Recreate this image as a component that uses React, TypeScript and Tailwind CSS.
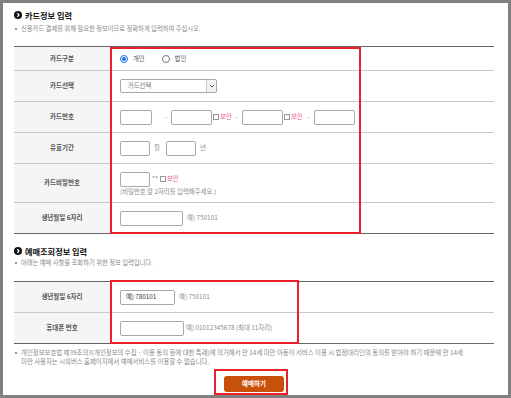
import { type FC, type ReactNode } from "react";

const KR = "font-['Noto_Sans_CJK_KR','Noto_Sans',sans-serif]";

const SectionTitle: FC<{ children: ReactNode }> = ({ children }) => (
  <div className="flex items-center h-[12px] gap-[3px]">
    <span className="w-[8px] h-[8px] rounded-full bg-[#111] flex items-center justify-center">
      <svg width="8" height="8" viewBox="0 0 8 8">
        <path d="M3.3 2.2 L5 4 L3.3 5.8" fill="none" stroke="#fff" strokeWidth="1.2" />
      </svg>
    </span>
    <span className="text-[8.2px] font-bold text-[#111] leading-[12px]">{children}</span>
  </div>
);

const Note: FC<{ children: ReactNode; className?: string }> = ({ children, className = "" }) => (
  <div className={`flex items-center h-[10px] text-[6.3px] leading-[10px] text-[#8a8a8a] ${className}`}>
    <span className="w-[2px] h-[2px] bg-[#9a9a9a] ml-[1px] mr-[4px]" />
    {children}
  </div>
);

const Row: FC<{ label: string; h: string; last?: boolean; children?: ReactNode; col?: boolean }> = ({
  label,
  h,
  last,
  children,
  col,
}) => (
  <div className={`flex ${h} ${last ? "" : "border-b border-[#c8c8c8]"}`}>
    <div className="w-[96px] bg-[#f5f5f5] flex items-center justify-center text-[6.5px] font-bold text-[#555]">
      {label}
    </div>
    <div className={`flex-1 pl-[10px] flex ${col ? "flex-col justify-center" : "items-center"}`}>{children}</div>
  </div>
);

const Box: FC<{ w: string; children?: ReactNode }> = ({ w, children }) => (
  <div className={`${w} h-[15px] border border-[#a8a8a8] rounded-[2px] bg-white flex items-center pl-[4px] text-[6.3px] text-[#333]`}>
    {children}
  </div>
);

const Secure: FC = () => (
  <span className="flex items-center ml-[1px]">
    <span className="w-[6px] h-[6px] border border-[#999] bg-white" />
    <span className="text-[6.3px] text-[#f0608a] ml-[1px]">보안</span>
  </span>
);

const Hint: FC<{ children: ReactNode; className?: string }> = ({ children, className = "" }) => (
  <span className={`text-[6.4px] text-[#8c8c8c] ${className}`}>{children}</span>
);

export default function App() {
  return (
    <div
      className={`w-[511px] h-[398px] border-[3px] border-[#808080] bg-white pl-[11px] pr-[14px] pt-[6px] overflow-hidden ${KR}`}
    >
      <SectionTitle>카드정보 입력</SectionTitle>
      <Note className="mt-[3px]">신용카드 결제를 위해 필요한 정보이므로 정확하게 입력하여 주십시오.</Note>

      <div className="relative mt-[12px] border-y border-[#666]">
        <Row label="카드구분" h="h-[24px]">
          <span className="w-[8px] h-[8px] rounded-full border border-[#1a73e8] flex items-center justify-center">
            <span className="w-[4px] h-[4px] rounded-full bg-[#1a73e8]" />
          </span>
          <span className="text-[6.3px] text-[#555] ml-[5px]">개인</span>
          <span className="w-[8px] h-[8px] rounded-full border border-[#777] ml-[17px]" />
          <span className="text-[6.3px] text-[#555] ml-[5px]">법인</span>
        </Row>
        <Row label="카드선택" h="h-[31px]">
          <div className="w-[97px] h-[14px] border border-[#a8a8a8] rounded-[2px] flex items-center">
            <span className="flex-1 pl-[7px] text-[6.3px] text-[#777]">카드선택</span>
            <span className="w-[10px] h-full border-l border-[#ccc] bg-[#f2f2f2] flex items-center justify-center">
              <svg width="6" height="6" viewBox="0 0 6 6">
                <path d="M1.2 2.2 L3 4 L4.8 2.2" fill="none" stroke="#444" strokeWidth="0.9" />
              </svg>
            </span>
          </div>
        </Row>
        <Row label="카드번호" h="h-[31px]">
          <Box w="w-[32px]" />
          <Hint className="ml-[13px] mr-[4px]">-</Hint>
          <Box w="w-[41px]" />
          <Secure />
          <Hint className="ml-[4px] mr-[4px]">-</Hint>
          <Box w="w-[41px]" />
          <Secure />
          <Hint className="ml-[5px] mr-[4px]">-</Hint>
          <Box w="w-[41px]" />
        </Row>
        <Row label="유효기간" h="h-[31px]">
          <Box w="w-[30px]" />
          <Hint className="ml-[4px] mr-[6px]">월</Hint>
          <Box w="w-[30px]" />
          <Hint className="ml-[4px]">년</Hint>
        </Row>
        <Row label="카드비밀번호" h="h-[39px]" col>
          <div className="flex items-center mt-[1px]">
            <Box w="w-[30px]" />
            <Hint className="ml-[2px] mr-[1px]">**</Hint>
            <Secure />
          </div>
          <Hint className="leading-[9px]">(비밀번호 앞 2자리를 입력해주세요.)</Hint>
        </Row>
        <Row label="생년월일 6자리" h="h-[30px]" last>
          <Box w="w-[63px]" />
          <Hint className="ml-[4px]">예) 750101</Hint>
        </Row>
        <div className="absolute left-[96px] top-0 w-[251px] h-[187px] border-2 border-[#e8212b] pointer-events-none" />
      </div>

      <div className="mt-[11px]">
        <SectionTitle>예매조회정보 입력</SectionTitle>
      </div>
      <Note className="mt-[1px]">아래는 예매 사항을 조회하기 위한 정보 입력입니다.</Note>

      <div className="relative mt-[13px] border-y border-[#666]">
        <Row label="생년월일 6자리" h="h-[31px]">
          <Box w="w-[55px]">
            <span className="ml-[1px]">예) 780101</span>
          </Box>
          <Hint className="ml-[4px]">예) 750101</Hint>
        </Row>
        <Row label="휴대폰 번호" h="h-[30px]" last>
          <Box w="w-[64px]" />
          <Hint className="ml-[2px]">예) 01012345678 (최대 11자리)</Hint>
        </Row>
        <div className="absolute left-[96px] top-[-2px] w-[189px] h-[64px] border-2 border-[#e8212b] pointer-events-none" />
      </div>

      <div className="mt-[4px] flex text-[6.4px] leading-[9px] text-[#8a8a8a] whitespace-nowrap">
        <span className="w-[2px] h-[2px] bg-[#9a9a9a] ml-[1px] mr-[4px] mt-[4px] shrink-0" />
        <div>
          개인정보보호법 제39조의3(개인정보의 수집 · 이용 동의 등에 대한 특례)에 의거해서 만 14세 미만 아동이 서비스
          이용 시 법정대리인의 동의를 받아야 하기 때문에 만 14세
          <br />
          미만 사용자는 시외버스 홈페이지에서 예매서비스를 이용할 수 없습니다.
        </div>
      </div>

      <div className="mt-[10px] flex justify-center">
        <div className="relative">
          <div className="w-[60px] h-[16px] rounded-[3px] bg-[#c9500a] flex items-center justify-center text-[6.5px] font-bold text-white">
            예매하기
          </div>
          <div className="absolute left-[-10px] top-[-7px] w-[74px] h-[26px] border-2 border-[#e8212b] pointer-events-none" />
        </div>
      </div>
    </div>
  );
}
